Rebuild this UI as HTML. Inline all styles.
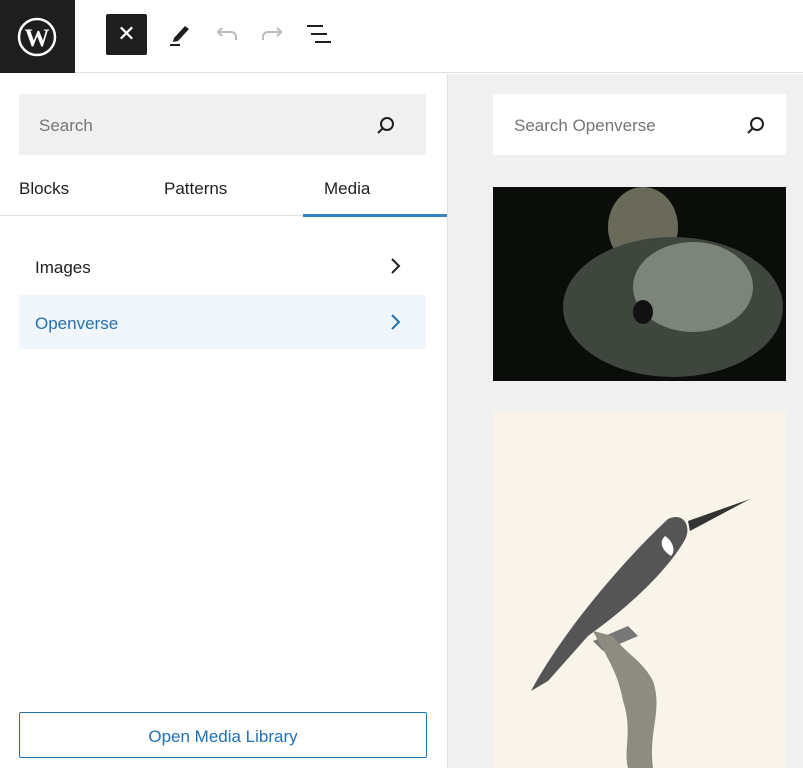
<!DOCTYPE html>
<html><head><style>
*{box-sizing:border-box;margin:0;padding:0}
body{width:803px;height:768px;overflow:hidden;font-family:"Liberation Sans",sans-serif;background:#fff;position:relative}
.abs{position:absolute}
</style></head><body>
<div class="abs" style="left:0;top:0;width:803px;height:73px;border-bottom:1px solid #e0e0e0;background:#fff"></div>
<div class="abs" style="left:0;top:0;width:75px;height:73px;background:#1e1e1e">
<svg class="abs" style="left:17px;top:17px" width="40" height="40" viewBox="0 0 40 40"><circle cx="20" cy="20" r="18" fill="none" stroke="#fff" stroke-width="2.5"/><text x="20" y="29" text-anchor="middle" font-family="Liberation Serif" font-weight="bold" font-size="25" fill="#fff">W</text></svg></div>
<div class="abs" style="left:106px;top:14px;width:41px;height:41px;background:#1e1e1e;border-radius:2px;color:#fff;font-size:22px;text-align:center;line-height:40px">✕</div>
<svg class="abs" style="left:166px;top:20px" width="28" height="28" viewBox="0 0 28 28"><path d="M8 18 L19 6 L23 9 L12 21 L7 22Z" fill="#1e1e1e"/><rect x="4" y="24" width="10" height="2" fill="#1e1e1e"/></svg>
<svg class="abs" style="left:214px;top:22px" width="26" height="24" viewBox="0 0 26 24"><path d="M8 6 L4 10 L8 14 M4 10 H17 a5 5 0 0 1 5 5 V18" fill="none" stroke="#bbb" stroke-width="2"/></svg>
<svg class="abs" style="left:259px;top:22px" width="26" height="24" viewBox="0 0 26 24"><path d="M18 6 L22 10 L18 14 M22 10 H9 a5 5 0 0 0 -5 5 V18" fill="none" stroke="#bbb" stroke-width="2"/></svg>
<svg class="abs" style="left:306px;top:24px" width="26" height="22" viewBox="0 0 26 22"><rect x="1" y="1" width="16" height="2" fill="#1e1e1e"/><rect x="5" y="9" width="16" height="2" fill="#1e1e1e"/><rect x="9" y="17" width="16" height="2" fill="#1e1e1e"/></svg>

<div class="abs" style="left:447px;top:74px;width:356px;height:694px;background:#f0f0f0;border-left:1px solid #e0e0e0"></div>
<div class="abs" style="left:19px;top:94px;width:407px;height:61px;background:#f0f0f0;border-radius:2px;color:#757575;font-size:17px;line-height:63px;padding-left:20px">Search</div>
<svg class="abs" style="left:376px;top:115px" width="20" height="20" viewBox="0 0 20 20"><circle cx="11" cy="9" r="6" fill="none" stroke="#1e1e1e" stroke-width="2"/><path d="M7 13 L2 18" stroke="#1e1e1e" stroke-width="2"/></svg>
<div class="abs" style="left:0;top:215px;width:447px;height:1px;background:#e0e0e0"></div>
<div class="abs" style="left:19px;top:179px;font-size:17px;color:#1e1e1e">Blocks</div>
<div class="abs" style="left:164px;top:179px;font-size:17px;color:#1e1e1e">Patterns</div>
<div class="abs" style="left:324px;top:179px;font-size:17px;color:#1e1e1e">Media</div>
<div class="abs" style="left:303px;top:214px;width:144px;height:3px;background:#3582c4"></div>
<div class="abs" style="left:35px;top:258px;font-size:17px;color:#1e1e1e">Images</div>
<svg class="abs" style="left:388px;top:256px" width="16" height="20" viewBox="0 0 16 20"><path d="M4 3 L11 10 L4 17" fill="none" stroke="#1e1e1e" stroke-width="2"/></svg>
<div class="abs" style="left:19px;top:295px;width:407px;height:54px;background:#f0f6fc;border-radius:2px"></div>
<div class="abs" style="left:35px;top:314px;font-size:17px;color:#2271b1">Openverse</div>
<svg class="abs" style="left:388px;top:312px" width="16" height="20" viewBox="0 0 16 20"><path d="M4 3 L11 10 L4 17" fill="none" stroke="#2271b1" stroke-width="2"/></svg>
<div class="abs" style="left:19px;top:712px;width:408px;height:46px;border:1px solid #2271b1;border-radius:2px;color:#2271b1;font-size:17px;text-align:center;line-height:47px">Open Media Library</div>

<div class="abs" style="left:493px;top:94px;width:293px;height:61px;background:#fff;color:#757575;font-size:17px;line-height:63px;padding-left:21px">Search Openverse</div>
<svg class="abs" style="left:746px;top:115px" width="20" height="20" viewBox="0 0 20 20"><circle cx="11" cy="9" r="6" fill="none" stroke="#1e1e1e" stroke-width="2"/><path d="M7 13 L2 18" stroke="#1e1e1e" stroke-width="2"/></svg>
<div class="abs" style="left:493px;top:187px;width:293px;height:194px;background:#0b0d0b;overflow:hidden">
<svg width="293" height="194" viewBox="0 0 293 194"><ellipse cx="150" cy="40" rx="35" ry="40" fill="#6a6a5a"/><ellipse cx="180" cy="120" rx="110" ry="70" fill="#3e463e"/><ellipse cx="200" cy="100" rx="60" ry="45" fill="#7d857a"/><ellipse cx="150" cy="125" rx="10" ry="12" fill="#111"/></svg></div>
<div class="abs" style="left:493px;top:411px;width:293px;height:357px;background:#f8f4ea">
<svg width="293" height="357" viewBox="0 0 293 357"><path d="M195 110 L257 88 L197 120Z" fill="#333"/><path d="M38 280 C70 220 130 150 175 108 C192 100 200 118 190 132 C170 165 130 200 95 225 L55 270Z" fill="#555"/><path d="M172 125 C180 130 183 140 178 145 C170 140 165 132 172 125Z" fill="#fff"/><path d="M100 230 L135 215 L145 225 L110 240Z" fill="#777"/><path d="M100 220 C110 240 125 260 130 290 C140 320 130 340 135 357 L160 357 C155 320 170 300 160 270 C150 250 130 240 120 225Z" fill="#8e8c80"/></svg></div>
</body></html>
